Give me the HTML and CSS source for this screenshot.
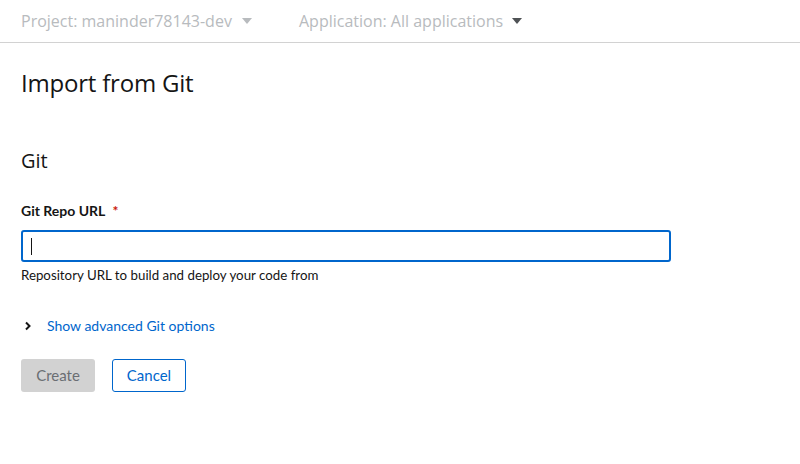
FILE: index.html
```html
<!DOCTYPE html>
<html>
<head>
<meta charset="utf-8">
<link rel="stylesheet" href="styles.css">
</head>
<body>
<header class="topbar">
  <div class="selector">
    <span class="sel-text">Project: maninder78143-dev</span>
    <span class="caret light"></span>
  </div>
  <div class="selector">
    <span class="sel-text">Application: All applications</span>
    <span class="caret dark"></span>
  </div>
</header>
<main class="page">
  <h1 class="title">Import from Git</h1>
  <h2 class="section">Git</h2>
  <div class="field">
    <label class="label">Git Repo URL <span class="req">*</span></label>
    <div class="input"><span class="cursor"></span></div>
    <p class="helper">Repository URL to build and deploy your code from</p>
  </div>
  <div class="expander">
    <svg class="chev" width="10" height="10" viewBox="0 0 10 10"><path d="M3 1.5 L6.5 5 L3 8.5" fill="none" stroke="#151515" stroke-width="2"/></svg>
    <span class="link">Show advanced Git options</span>
  </div>
  <div class="actions">
    <button class="btn disabled">Create</button>
    <button class="btn secondary">Cancel</button>
  </div>
</main>
</body>
</html>
```
FILE: styles.css
```css
* { box-sizing: border-box; }
body {
  margin: 0;
  font-family: "Lato", "Open Sans", sans-serif;
  color: #151515;
  background: #fff;
}
.topbar {
  height: 43px;
  border-bottom: 1px solid #d2d2d2;
  display: flex;
  align-items: center;
  padding-left: 21px;
}
.selector {
  display: flex;
  align-items: center;
  font-size: 16px;
  color: #b8bbbe;
  font-family: "Open Sans", sans-serif;
}
.selector:first-child { width: 278px; }
.sel-text { width: 221px; flex: none; }
.selector:last-child .sel-text { width: 213px; }
.caret {
  flex: none;
  width: 0; height: 0;
  border-left: 5px solid transparent;
  border-right: 5px solid transparent;
  border-top: 6px solid #b8bbbe;
}
.caret.dark { border-top-color: #4f5255; }
.page { padding: 0 21px; }
.title {
  margin: 23px 0 0;
  font-family: "Open Sans", sans-serif;
  font-size: 24px;
  font-weight: 400;
  line-height: 34px;
  letter-spacing: -0.2px;
}
.section {
  margin: 48px 0 0;
  font-family: "Open Sans", sans-serif;
  font-size: 20px;
  font-weight: 400;
  line-height: 26px;
}
.field { margin-top: 27px; }
.label {
  display: block;
  font-size: 14px;
  font-weight: 700;
  line-height: 20px;
}
.req { color: #c9190b; margin-left: 4px; }
.input {
  margin-top: 9px;
  width: 650px;
  height: 32px;
  border: 2px solid #0066cc;
  border-radius: 3px;
  display: flex;
  align-items: center;
  padding-left: 8px;
}
.cursor { width: 1px; height: 17px; background: #151515; }
.helper {
  margin: 3px 0 0;
  font-size: 13.3px;
  line-height: 20px;
}
.expander {
  margin-top: 29px;
  display: flex;
  align-items: center;
  gap: 14px;
  padding-left: 2px;
  height: 24px;
}
.link { color: #0066cc; font-size: 14px; line-height: 24px; }
.actions {
  margin-top: 21px;
  display: flex;
  gap: 17px;
}
.btn {
  font-family: inherit;
  font-size: 15px;
  height: 33px;
  width: 74px;
  border-radius: 3px;
  padding: 0 0 2px;
}
.btn.disabled { background: #d2d2d2; color: #6a6e73; border: none; }
.btn.secondary { background: #fff; color: #0066cc; border: 1px solid #0066cc; }
```
